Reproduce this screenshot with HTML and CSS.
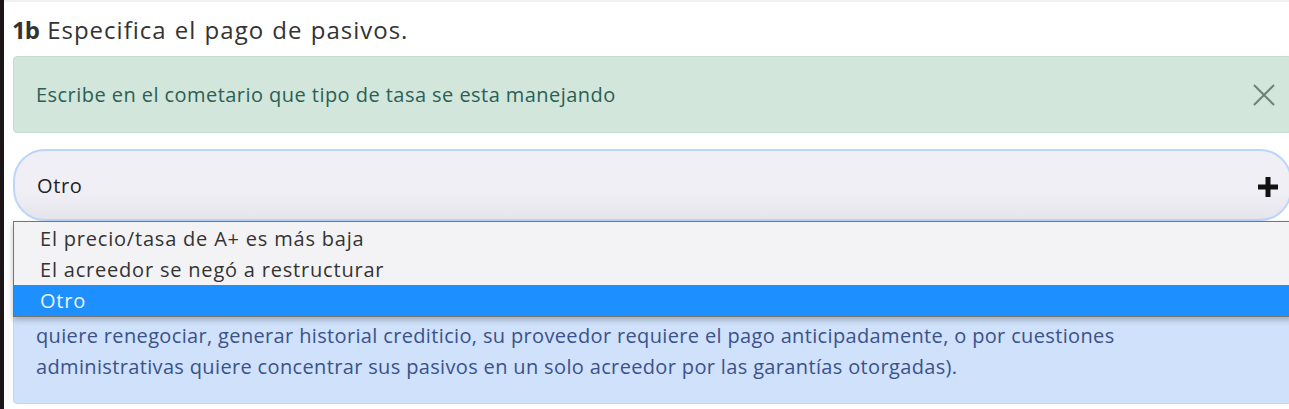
FILE: index.html
```html
<!DOCTYPE html>
<html lang="es">
<head>
    <meta charset="UTF-8">
    <meta name="viewport" content="width=device-width, initial-scale=1.0">
    <title>Pago de pasivos</title>
    <link rel="stylesheet" href="styles.css">
</head>
<body>
    <div class="edge"></div>
    <main class="page">
        <h2 class="question"><b>1b</b> Especifica el pago de pasivos.</h2>

        <div class="alert alert-success">
            <span>Escribe en el cometario que tipo de tasa se esta manejando</span>
            <button class="close" aria-label="Cerrar">
                <svg width="24" height="24" viewBox="0 0 24 24">
                    <path d="M2 2 L22 22 M22 2 L2 22" stroke="#6f8279" stroke-width="2" fill="none"/>
                </svg>
            </button>
        </div>

        <div class="select-wrap">
            <div class="select">
                <span>Otro</span>
                <svg class="plus" width="24" height="24" viewBox="0 0 24 24">
                    <path d="M12 2 V22 M2 12 H22" stroke="#111" stroke-width="5" fill="none"/>
                </svg>
            </div>
            <ul class="options">
                <li>El precio/tasa de A+ es más baja</li>
                <li>El acreedor se negó a restructurar</li>
                <li class="selected">Otro</li>
            </ul>
        </div>

        <!-- top of this box sits under the open dropdown -->
        <div class="alert alert-info">
            <p>quiere renegociar, generar historial crediticio, su proveedor requiere el pago anticipadamente, o por cuestiones<br>
            administrativas quiere concentrar sus pasivos en un solo acreedor por las garantías otorgadas).</p>
        </div>
    </main>
</body>
</html>
```

FILE: styles.css
```css
/* Question card styling */
body {
    margin: 0;
    padding: 0;
    display: flex;
    background-color: #fff;
    font-family: "Open Sans", Arial, sans-serif;
    color: #333;
    overflow: hidden;
}

.edge {
    width: 4px;
    min-height: 409px;
    background-color: #1c1517;
    flex-shrink: 0;
}

.page {
    width: 1279px;
    flex-shrink: 0;
    padding: 0 0 0 9px;
    border-top: 2px solid #f1f1f1;
}

.question {
    margin: 13px 0 11px -1px;
    font-size: 24px;
    font-weight: 400;
    letter-spacing: 1px;
    word-spacing: 1px;
    color: #333;
    line-height: 30px;
}

.question b {
    font-weight: 700;
    letter-spacing: -1px;
}

.alert {
    border-radius: 4px;
    font-size: 20px;
}

.alert-success {
    height: 75px;
    display: flex;
    align-items: center;
    justify-content: space-between;
    padding: 0 15px 0 22px;
    background-color: #d2e6dc;
    border: 1px solid #c2dcd0;
    color: #2b6054;
    letter-spacing: 0.45px;
}

.close {
    background: none;
    border: none;
    padding: 0;
    display: flex;
}

.select-wrap {
    position: relative;
    margin-top: 16px;
}

.select {
    height: 68px;
    display: flex;
    align-items: center;
    justify-content: space-between;
    padding: 0 10px 0 22px;
    border: 2px solid #bcd6fb;
    border-radius: 32px;
    background: linear-gradient(#f0eff5 60%, #e6e5eb);
    color: #222;
    font-size: 20px;
    letter-spacing: 0.6px;
}

.plus {
    margin-top: 4px;
}

.options {
    position: absolute;
    top: 72px;
    left: 0;
    right: 0;
    margin: 0;
    padding: 1px 0 0;
    list-style: none;
    background-color: #f3f3f5;
    border: 1px solid #767676;
    box-shadow: 0 3px 6px rgba(0, 0, 0, 0.25);
    font-size: 20px;
    letter-spacing: 0.8px;
    z-index: 2;
}

.options li {
    height: 31px;
    line-height: 31px;
    padding-left: 26px;
    color: #333;
}

.options li.selected {
    background-color: #1e8fff;
    color: #eaf4ff;
}

.alert-info {
    margin-top: 16px;
    padding: 82px 22px 21px;
    background-color: #cfe1fb;
    border: 1px solid #c0d6f5;
    color: #3b528a;
    letter-spacing: 0.35px;
}

.alert-info p {
    margin: 0;
    line-height: 31px;
}
```
